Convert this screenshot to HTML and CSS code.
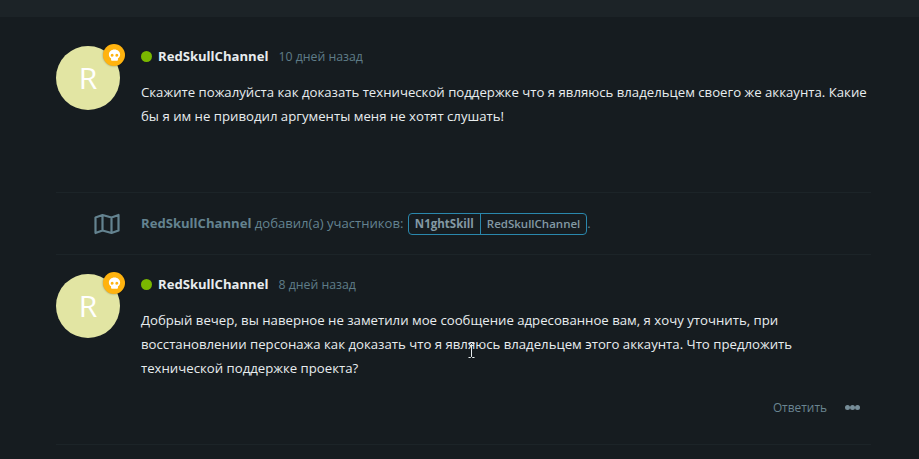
FILE: index.html
```html
<!DOCTYPE html>
<html lang="ru">
<head>
    <meta charset="UTF-8">
    <title>RedSkullChannel</title>
    <link rel="stylesheet" href="styles.css">
</head>
<body>
    <div class="topbar"></div>
    <div class="feed">
        <div class="post post-first">
            <div class="avatar">R
                <span class="badge">
                    <svg viewBox="0 0 16 16" width="15" height="15"><path fill="#fff" fill-rule="evenodd" d="M8 1.500c-3.400 0-6 2.300-6 5.300 0 1.800.9 3.300 2.300 4.200v1.500c0 .6.400 1 1 1h5.400c.6 0 1-.4 1-1V11c1.400-.9 2.300-2.400 2.300-4.200 0-3-2.600-5.300-6-5.300zM5.500 9.300a1.600 1.600 0 1 1 0-3.200 1.600 1.600 0 0 1 0 3.200zm5 0a1.600 1.600 0 1 1 0-3.200 1.600 1.600 0 0 1 0 3.200z"/></svg>
                </span>
            </div>
            <div class="post-body">
                <div class="meta"><span class="dot"></span><b class="author">RedSkullChannel</b><span class="time">10 дней назад</span></div>
                <p class="text">Скажите пожалуйста как доказать технической поддержке что я являюсь владельцем своего же аккаунта. Какие бы я им не приводил аргументы меня не хотят слушать!</p>
            </div>
        </div>

        <div class="event">
            <svg class="event-icon" viewBox="0 0 26 22" width="26" height="22"><path fill="none" stroke="#648390" stroke-width="2.200" stroke-linejoin="round" d="M1.500 4.500 8.500 2l9 2.500L24.500 2v15.500l-7 2.500-9-2.500-7 2.500zM8.500 2v15.500M17.500 4.500V20"/></svg>
            <div class="event-text"><b>RedSkullChannel</b> добавил(а) участников: <span class="tags"><span class="tag tag-bold">N1ghtSkill</span><span class="tag">RedSkullChannel</span></span>.</div>
        </div>

        <div class="post post-second">
            <div class="avatar">R
                <span class="badge">
                    <svg viewBox="0 0 16 16" width="15" height="15"><path fill="#fff" fill-rule="evenodd" d="M8 1.500c-3.400 0-6 2.300-6 5.300 0 1.800.9 3.300 2.300 4.200v1.500c0 .6.400 1 1 1h5.400c.6 0 1-.4 1-1V11c1.400-.9 2.300-2.400 2.300-4.200 0-3-2.600-5.300-6-5.300zM5.500 9.300a1.600 1.600 0 1 1 0-3.200 1.600 1.600 0 0 1 0 3.200zm5 0a1.600 1.600 0 1 1 0-3.200 1.600 1.600 0 0 1 0 3.200z"/></svg>
                </span>
            </div>
            <div class="post-body">
                <div class="meta"><span class="dot"></span><b class="author">RedSkullChannel</b><span class="time">8 дней назад</span></div>
                <p class="text">Добрый вечер, вы наверное не заметили мое сообщение адресованное вам, я хочу уточнить, при восстановлении персонажа как доказать что я являюсь владельцем этого аккаунта. Что предложить технической поддержке проекта?</p>
                <div class="actions"><span class="reply">Ответить</span><span class="more"><i></i><i></i><i></i></span></div>
            </div>
        </div>
    </div>
    <svg class="cursor" viewBox="0 0 7 15" width="7" height="15"><path fill="none" stroke="#e8eef0" d="M.5.5h2l1 1 1-1h2M3.500 1.500v12M.5 14.500h2l1-1 1 1h2"/></svg>
</body>
</html>
```

FILE: styles.css
```css
html, body {
    margin: 0;
    height: 459px;
    overflow: hidden;
}
body {
    position: relative;
    background: #161c20;
    font-family: "Open Sans", sans-serif;
    font-size: 13.2px;
    color: #e8edef;
}
.topbar {
    height: 17px;
    background: #1c2327;
}
.feed {
    margin: 0 48px 0 56px;
}
.post {
    display: flex;
    box-sizing: border-box;
    border-bottom: 1px solid #1c2428;
}
.post-first {
    height: 176px;
    padding-top: 29px;
}
.post-second {
    height: 190px;
    padding-top: 19px;
}
.avatar {
    position: relative;
    flex: none;
    width: 64px;
    height: 64px;
    border-radius: 50%;
    background: #e2e5a3;
    color: #fff;
    font-size: 30px;
    line-height: 64px;
    text-align: center;
}
.badge {
    position: absolute;
    top: -2px;
    right: -5px;
    width: 22px;
    height: 22px;
    border-radius: 50%;
    background: #ffb30f;
    box-shadow: 0 0 2px rgba(0,0,0,0.4);
    display: flex;
    align-items: center;
    justify-content: center;
}
.post-body {
    flex: 1;
    margin-left: 21px;
}
.meta {
    display: flex;
    align-items: center;
    height: 20px;
}
.dot {
    width: 11px;
    height: 11px;
    border-radius: 50%;
    background: #7ab800;
    margin-right: 6px;
}
.author {
    font-size: 13.100px;
    font-weight: 700;
    color: #e8ecee;
}
.time {
    margin-left: 10px;
    font-size: 12.300px;
    color: #5f7c88;
}
.text {
    margin: 14px 0 0;
    line-height: 24px;
}
.event {
    display: flex;
    align-items: center;
    height: 62px;
    border-bottom: 1px solid #1c2428;
    box-sizing: border-box;
    padding-left: 38px;
}
.event-text {
    margin-left: 21px;
    font-size: 13.100px;
    color: #648390;
}
.tags {
    display: inline-flex;
    margin-left: 1px;
    border: 1px solid #2a88ad;
    border-radius: 4px;
    font-size: 11.500px;
    line-height: 20px;
}
.tag {
    padding: 0 6px;
    color: #8399a4;
    font-weight: 600;
}
.tag-bold {
    font-weight: 700;
}
.tag + .tag {
    border-left: 1px solid #2a88ad;
}
.actions {
    display: flex;
    justify-content: flex-end;
    align-items: center;
    margin-top: 19px;
    padding-right: 11px;
    color: #6a8591;
    font-size: 11.900px;
}
.more {
    display: flex;
    margin-left: 18px;
}
.more i {
    width: 5px;
    height: 5px;
    border-radius: 50%;
    background: #768d98;
}
.cursor {
    position: absolute;
    left: 468px;
    top: 343px;
}
```
